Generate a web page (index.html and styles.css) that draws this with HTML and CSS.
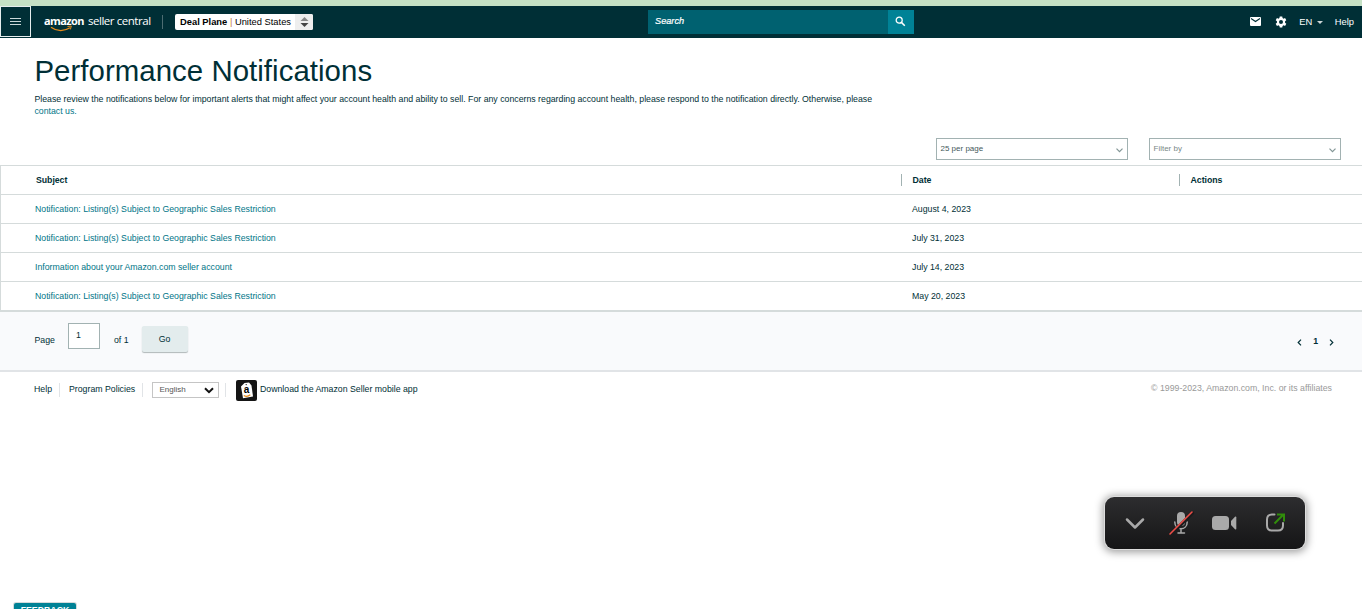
FILE: index.html
```html
<!DOCTYPE html>
<html lang="en">

<head>
	<meta charset="utf-8">
	<title>Performance Notifications</title>
	<link rel="stylesheet" href="styles.css">
</head>

<body>
	<header class="navbar">
		<button class="menu" aria-label="Menu">
			<svg width="11" height="9" viewBox="0 0 11 9"><path d="M0 1.5h11M0 4.5h11M0 7.5h11" stroke="#c9d8d9" /></svg>
		</button>
		<div class="logo">
			<b>amazon</b><span>seller central</span>
			<svg class="smile" width="23" height="7" viewBox="0 0 23 7" fill="none" stroke="#e88b1a"><path d="M1 2.200C7 6.500 14 6.500 20 2.800" stroke-width="1.300" /><path d="M17.500 1.500l3.800-.5-.9 3.400" /></svg>
		</div>
		<div class="market">
			<span class="market-name"><b>Deal Plane</b> <i>|</i> United States</span>
			<span class="market-arrows"><svg width="9" height="12" viewBox="0 0 9 12"><path d="M.5 5l4-4 4 4z" fill="#888" /><path d="M.5 7l4 4 4-4z" fill="#444" /></svg></span>
		</div>
		<div class="search">
			<span class="search-text">Search</span>
			<button class="search-button" aria-label="Search">
				<svg width="11" height="11" viewBox="0 0 11 11" fill="none" stroke="#fff"><circle cx="4.200" cy="4.200" r="3" stroke-width="1.300" /><path d="M6.400 6.400l3.400 3.400" stroke-width="1.500" /></svg>
			</button>
		</div>
		<nav class="tools">
			<svg class="mail" width="11" height="9" viewBox="0 0 11 9"><rect width="11" height="9" rx="1" fill="#fff" /><path d="M1 1.500l4.500 3 4.500-3" fill="none" stroke="#002f36" stroke-width="1.100" /></svg>
			<svg class="gear" width="12" height="12" viewBox="0 0 24 24"><path fill="#fff" fill-rule="evenodd" d="M9.500 1h5l.6 3.200 2 1.100 3-1.100 2.500 4.300-2.500 2.200v2.600l2.500 2.200-2.500 4.300-3-1.100-2 1.100-.6 3.200h-5l-.6-3.200-2-1.100-3 1.100-2.500-4.300 2.500-2.200v-2.600L1.400 8.500l2.500-4.300 3 1.100 2-1.100zM12 8a4 4 0 1 0 0 8 4 4 0 0 0 0-8z" /></svg>
			<span class="lang">EN</span>
			<svg class="caret" width="6" height="3" viewBox="0 0 6 3"><path d="M0 0h6L3 3z" fill="#ccd5d6" /></svg>
			<span>Help</span>
		</nav>
	</header>

	<main>
		<section class="intro">
			<h1>Performance Notifications</h1>
			<p>Please review the notifications below for important alerts that might affect your account health and ability to sell. For any concerns regarding account health, please respond to the notification directly. Otherwise, please <a href="#">contact us.</a></p>
		</section>

		<div class="filters">
			<div class="dropdown">
				<span>25 per page</span>
				<svg width="7" height="5" viewBox="0 0 7 5"><path d="M.5.7l3 3 3-3" fill="none" stroke="#829595" stroke-width="1.200" /></svg>
			</div>
			<div class="dropdown placeholder">
				<span>Filter by</span>
				<svg width="7" height="5" viewBox="0 0 7 5"><path d="M.5.7l3 3 3-3" fill="none" stroke="#829595" stroke-width="1.200" /></svg>
			</div>
		</div>

		<div class="table">
			<div class="row head">
				<span>Subject</span>
				<span>Date</span>
				<span>Actions</span>
			</div>
			<div class="row">
				<a href="#">Notification: Listing(s) Subject to Geographic Sales Restriction</a>
				<span>August 4, 2023</span>
			</div>
			<div class="row">
				<a href="#">Notification: Listing(s) Subject to Geographic Sales Restriction</a>
				<span>July 31, 2023</span>
			</div>
			<div class="row">
				<a href="#">Information about your Amazon.com seller account</a>
				<span>July 14, 2023</span>
			</div>
			<div class="row">
				<a href="#">Notification: Listing(s) Subject to Geographic Sales Restriction</a>
				<span>May 20, 2023</span>
			</div>
		</div>

		<div class="pagination">
			<span class="page-label">Page</span>
			<span class="page-input">1</span>
			<span class="page-total">of 1</span>
			<button class="go">Go</button>
			<div class="pager">
				<svg width="5" height="7" viewBox="0 0 5 7"><path d="M4 .7L1.200 3.500 4 6.300" fill="none" stroke="#002f36" stroke-width="1.200" /></svg>
				<b>1</b>
				<svg width="5" height="7" viewBox="0 0 5 7"><path d="M1 .7l2.800 2.800L1 6.300" fill="none" stroke="#002f36" stroke-width="1.200" /></svg>
			</div>
		</div>
	</main>

	<footer class="footer">
		<span class="footer-item help">Help</span>
		<span class="footer-item policies">Program Policies</span>
		<div class="footer-item language">
			<div class="language-select">
				<span>English</span>
				<svg width="10" height="7" viewBox="0 0 10 7"><path d="M1 1.200l4 4 4-4" fill="none" stroke="#111" stroke-width="2" /></svg>
			</div>
		</div>
		<div class="app">
			<svg width="21" height="21" viewBox="0 0 21 21">
				<rect width="21" height="21" rx="2" fill="#151515" />
				<path d="M5 6.500L8.500 3l4.500-.5 2.500 3L17 16.500 7 18.300z" fill="#fff" />
				<circle cx="10.200" cy="4.600" r=".7" fill="#151515" />
				<text class="app-letter" x="7.800" y="13.300">a</text>
				<path d="M7.800 15.500c2 1.200 4.600.8 6.500-.8" fill="none" stroke="#e88b1a" stroke-width="1.200" />
			</svg>
			<span>Download the Amazon Seller mobile app</span>
		</div>
		<span class="copyright">© 1999-2023, Amazon.com, Inc. or its affiliates</span>
	</footer>

	<div class="call-bar">
		<svg width="200" height="51" viewBox="0 0 200 51" fill="none" stroke="#a9a9a9" stroke-width="2" stroke-linecap="round" stroke-linejoin="round">
			<path d="M22 22.500l8 8 8-8" stroke-width="2.500" />
			<rect x="72" y="15" width="8" height="14" rx="4" fill="#a9a9a9" stroke="none" />
			<path d="M69.800 25c0 9 12.400 9 12.400 0M76 32v4M73 36h6.500" stroke-width="1.500" />
			<path d="M66 37.500L87.500 16" stroke="#1b1b1c" stroke-width="3.500" />
			<path d="M65 37L87 15" stroke="#ee4e48" stroke-width="1.600" />
			<rect x="107" y="19" width="17" height="14" rx="3.500" fill="#a9a9a9" stroke="none" />
			<path d="M126 24l4-4.300c.8-.6 1.300-.2 1.300.5v11.600c0 .7-.5 1.100-1.300.5l-4-4.300z" fill="#a9a9a9" stroke="none" />
			<path d="M169.500 17.500H167q-5 0-5 5v6q0 5 5 5h6q5 0 5-5V26" />
			<path d="M169.500 26.500l8.500-8.500M172 17.500h7v7" stroke="#318d0b" stroke-linecap="butt" stroke-linejoin="miter" />
		</svg>
	</div>
	<button class="feedback">FEEDBACK</button>
</body>

</html>
```
FILE: styles.css
```css
* {
	box-sizing: border-box;
}

body {
	margin: 0;
	height: 609px;
	overflow: hidden;
	position: relative;
	font: 8.76px/12px 'Liberation Sans', Arial, sans-serif;
	color: #002f36;
	background: #fff;
}

svg {
	display: block;
	flex: none;
}

button {
	padding: 0;
	border: 0;
	font: inherit;
	color: inherit;
}

a {
	color: #007587;
	text-decoration: none;
}

/* top bar */
.navbar {
	display: flex;
	align-items: center;
	height: 38px;
	padding-bottom: 1px;
	border-top: 6px solid #c5e1c5;
	background: #002f36;
	color: #fff;
	white-space: nowrap;
}

.menu {
	display: flex;
	align-items: center;
	justify-content: center;
	width: 31px;
	height: 31px;
	border: 1px solid #e6eeee;
	background: #002f36;
}

.logo {
	position: relative;
	display: flex;
	gap: 4px;
	width: 132px;
	height: 14px;
	padding-left: 13px;
	border-right: 1px solid #4d6d72;
	font: 11.5px/12px 'Open Sans', sans-serif;
	letter-spacing: -0.45px;
}

.logo b {
	font-size: 11px;
	letter-spacing: -0.6px;
}

.smile {
	position: absolute;
	left: 19px;
	top: 10px;
}

.market {
	display: flex;
	width: 138px;
	height: 16px;
	margin-left: 12px;
	border-radius: 2px;
	overflow: hidden;
	background: #fff;
	color: #000;
	font-size: 9.35px;
	line-height: 16px;
}

.market-name {
	flex: 1;
	padding-left: 5px;
}

.market-name i {
	color: #c77b30;
	font-style: normal;
}

.market-arrows {
	display: flex;
	align-items: center;
	justify-content: center;
	width: 18px;
	background: #eee;
}

.search {
	display: flex;
	width: 266px;
	height: 24px;
	margin: 1px 0 0 335px;
	background: #006170;
}

.search-text {
	flex: 1;
	padding-left: 7px;
	font-size: 9.2px;
	font-style: italic;
	line-height: 23px;
	-webkit-text-stroke: 0.2px #fff;
}

.search-button {
	display: flex;
	align-items: center;
	justify-content: center;
	width: 26px;
	padding: 0 2px 1px 0;
	background: #008296;
}

.tools {
	display: flex;
	align-items: center;
	margin-left: auto;
	padding-right: 8px;
	font-size: 9.4px;
}

.gear {
	margin: 0 12.5px 0 14px;
}

.caret {
	margin: 1px 12px 0 4.5px;
}

/* heading */
.intro {
	height: 100px;
	padding: 16px 0 0 34.4px;
}

.intro h1 {
	margin: 0;
	font-size: 29.4px;
	font-weight: normal;
	line-height: 34px;
	letter-spacing: 0.05px;
}

.intro p {
	width: 845px;
	margin: 5px 0 0;
}

.filters {
	display: flex;
	justify-content: flex-end;
	gap: 21px;
	height: 27px;
	padding-right: 21px;
}

.dropdown {
	display: flex;
	align-items: center;
	justify-content: space-between;
	width: 192px;
	height: 22px;
	padding: 0 4px 0 3.5px;
	border: 1px solid #a2b2b2;
	font-size: 8px;
	color: #44595b;
}

.dropdown svg {
	margin-top: 3px;
}

.placeholder {
	color: #7a8988;
}

/* notifications */
.table {
	border-top: 1px solid #d5dbdb;
	border-left: 1px solid #d5dbdb;
}

.row {
	display: grid;
	grid-template-columns: 877px 278px 1fr;
	align-items: center;
	height: 29px;
	padding-left: 34px;
	border-bottom: 1px solid #d5dbdb;
}

.row:last-child {
	border-bottom-width: 2px;
	height: 30px;
}

.head {
	font-weight: bold;
}

.head span {
	padding-left: 1px;
	letter-spacing: -0.05px;
}

.head span + span {
	margin-left: -11px;
	padding-left: 10.6px;
	border-left: 1px solid #a2b2b2;
}

.pagination {
	display: flex;
	height: 60px;
	padding-left: 34px;
	border-bottom: 2px solid #e1e4e7;
	background: #f9fafc;
}

.page-label {
	width: 34px;
	padding: 22px 0 0 0.5px;
}

.page-input {
	width: 32px;
	height: 26px;
	margin-top: 11px;
	padding: 6px 7px;
	border: 1px solid #a2b2b2;
	background: #fff;
	line-height: 11px;
}

.page-total {
	width: 41px;
	padding: 22px 0 0 14px;
}

.go {
	width: 46px;
	height: 26px;
	margin: 14px 0 0 0.5px;
	border-radius: 2px;
	background: #e3eced;
	box-shadow: 0 1px 1px #b0b7b9;
}

.pager {
	display: flex;
	align-items: center;
	gap: 11px;
	height: 12px;
	margin: 24px 28px 0 auto;
}

.pager b {
	margin-top: -2px;
}

/* footer */
.footer {
	display: flex;
	height: 36px;
	padding: 8px 30px 0 34px;
	white-space: nowrap;
}

.footer-item {
	height: 14px;
	margin-top: 3px;
	border-right: 1px solid #e1e4e7;
}

.help {
	width: 26px;
}

.policies {
	width: 83px;
	padding-left: 9px;
}

.language {
	width: 83px;
	padding-left: 9px;
}

.language-select {
	display: flex;
	align-items: center;
	justify-content: space-between;
	width: 67px;
	height: 16px;
	margin-top: -1px;
	padding: 0 4px 0 6.5px;
	border: 1px solid #c5c5c5;
	font-size: 8px;
	color: #555;
}

.app {
	display: flex;
	gap: 3px;
	margin-left: 10px;
}

.app span {
	margin-top: 3px;
}

.app-letter {
	font: bold 10px 'Liberation Sans', Arial, sans-serif;
}

.copyright {
	margin: 2px 0 0 auto;
	color: #999;
}

/* floating controls */
.call-bar {
	position: absolute;
	left: 1105px;
	top: 497px;
	width: 200px;
	height: 52px;
	border-radius: 9px;
	background: linear-gradient(#2d2d2f, #151516);
	box-shadow: 0 0 0 1px #ddd, 0 1px 8px 2px rgba(0, 0, 0, 0.4);
}

.feedback {
	position: absolute;
	left: 14px;
	top: 603px;
	width: 62px;
	height: 20px;
	border-radius: 2px 2px 0 0;
	background: #008296;
	box-shadow: 0 0 0 1px #d5dbdb;
	color: #fff;
	display: flex;
	justify-content: center;
	font-size: 8.75px;
	font-weight: bold;
	line-height: 15px;
}
```
